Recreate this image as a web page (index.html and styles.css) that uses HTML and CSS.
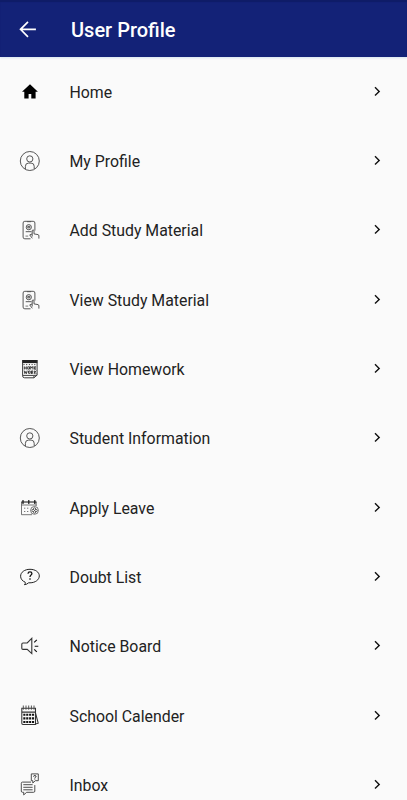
FILE: index.html
```html
<!DOCTYPE html>
<html lang="en">
<head>
<meta charset="utf-8">
<title>User Profile</title>
<link rel="stylesheet" href="styles.css">
</head>
<body>
<svg class="defs" aria-hidden="true">
  <symbol id="chevron" viewBox="0 0 12 12"><path d="M4 1.2 8.2 5.4 4 9.6" fill="none" stroke="#111" stroke-width="1.4"/></symbol>
  <symbol id="person" viewBox="0 0 24 24"><g fill="none" stroke="#444" stroke-width=".9"><circle cx="11.8" cy="12" r="9.5"/><circle cx="11.8" cy="9.9" r="3.1"/><path d="M7.4 20v-2.7q0-3.2 3.1-3.2h2.6q3.1 0 3.1 3.2V20"/></g></symbol>
  <symbol id="study" viewBox="0 0 24 24"><g fill="none" stroke="#444" stroke-width=".9"><path d="M12.5 20.8H6.8q-1.7 0-1.7-1.7V5q0-1.7 1.7-1.7h8.4q1.7 0 1.7 1.7v7.6"/><circle cx="10.8" cy="9.2" r="2.6"/><path d="M9.8 8.4h2v1.5h-2zM7.7 13.7h5.8"/><path d="M9 3.7h4M7.5 18.1h2.7" stroke-width=".7"/><path d="M14.2 18.5v-6q.9-1.2 1.8 0v3.4l4 .7q.9.2.9 1.3v2.7M14 16l-2.3.9 2.6 3.4"/></g></symbol>
</svg>
<header class="bar">
  <svg class="back" viewBox="0 0 24 24"><path d="M21.5 11.2H4M12 2.2 3 11.2l9 9" fill="none" stroke="#fff" stroke-width="2"/></svg>
  <h1>User Profile</h1>
</header>
<ul class="menu">
  <li><svg class="icon" viewBox="0 0 24 24"><path d="M12 4.3 19.9 11.7H17.6v6.8h-4.3v-4.6h-2.7v4.6H6.3v-6.8H4z"/></svg><span>Home</span><svg class="chevron"><use href="#chevron"/></svg></li>
  <li><svg class="icon"><use href="#person"/></svg><span>My Profile</span><svg class="chevron"><use href="#chevron"/></svg></li>
  <li><svg class="icon"><use href="#study"/></svg><span>Add Study Material</span><svg class="chevron"><use href="#chevron"/></svg></li>
  <li><svg class="icon"><use href="#study"/></svg><span>View Study Material</span><svg class="chevron"><use href="#chevron"/></svg></li>
  <li><svg class="icon" viewBox="0 0 24 24"><path d="M4.2 3h15.2v3.1H4.2z" fill="#222"/><path d="M4.6 3v15.8q0 2 2 2h9.3l3.2-2.7V3M15.9 20.8v-2.5h3.2M4.8 18.4h11" fill="none" stroke="#333" stroke-width=".95"/><path d="M5.5 7.6h13" stroke="#222" stroke-width="1" stroke-dasharray="1 1.7"/><path d="M6.3 9.4v3.1M8.3 9.4v3.1M6.3 11h2M9.7 9.8h1.8v2.3H9.7zM12.7 12.5V9.4l1.1 1.5 1.1-1.5v3.1M18 9.8h-1.7v2.4H18M16.3 11H18M6.2 13.6l.7 3 .8-2 .8 2 .7-3M10.5 14h1.7v2.3h-1.7zM13.5 17v-3.1h1.3v1.5h-1l1.3 1.5M16.6 13.6v3.3M18.2 13.7l-1.4 1.5 1.4 1.6" fill="none" stroke="#222" stroke-width=".85"/></svg><span>View Homework</span><svg class="chevron"><use href="#chevron"/></svg></li>
  <li><svg class="icon"><use href="#person"/></svg><span>Student Information</span><svg class="chevron"><use href="#chevron"/></svg></li>
  <li><svg class="icon" viewBox="0 0 24 24"><g fill="none" stroke="#555" stroke-width=".8"><path d="M14 18.7H3.5V6H18.2v4M3.5 9h14.7"/><path d="M3.3 6h15.4" stroke="#333"/><path d="M5 4v4M10.8 4v4M16.8 4v4" stroke="#111" stroke-width="1.15"/><path d="M6 12.2h1.3M9 12.2h1.3M6 15.5h1.3M9 15.5h1.3"/><circle cx="16.5" cy="14.4" r="3.9"/><path d="m13.7 14.5 2.9-2.9 2.7 2.9-2.7 2.8zM15.1 13l3 3M18.1 13l-3 3" stroke-width="1"/></g></svg><span>Apply Leave</span><svg class="chevron"><use href="#chevron"/></svg></li>
  <li><svg class="icon" viewBox="0 0 24 24"><path d="M7.2 17.2C4.4 16 2.6 14 2.6 11.2c0-4 4.1-6.9 9.4-6.9s9.3 2.8 9.3 6.6-4 6.9-9.3 6.9h-1.4q-1.7 1.7-4.2 1.9 1.3-1 .8-2.5z" fill="none" stroke="#222" stroke-width="1"/><path d="M10 8.7q.1-1.8 2-1.8t1.9 1.7q0 1-1.1 1.7-.8.5-.8 1.7m0 1.2v1.5" fill="none" stroke="#111" stroke-width="1.3"/></svg><span>Doubt List</span><svg class="chevron"><use href="#chevron"/></svg></li>
  <li><svg class="icon" viewBox="0 0 24 24"><path d="M13.8 4.3v15.3L9.2 15.4H5q-1.2 0-1.2-1.2v-4q0-1.2 1.2-1.2h4.2z" fill="none" stroke="#333" stroke-width="1.1"/><path d="m16.2 8.4 2.6-2.5M16.7 12.2h3.6M16.2 15.4l2.6 2.5" stroke="#111" stroke-width="1.15"/></svg><span>Notice Board</span><svg class="chevron"><use href="#chevron"/></svg></li>
  <li><svg class="icon" viewBox="0 0 24 24"><path d="M3.8 4.2h13.7v16.2H5q-1.2 0-1.2-1.2zM3.8 8.1h13.7M17.5 9l2.7 10.2-2.7.7" fill="none" stroke="#333" stroke-width="1.05"/><path d="M5.3 1.5v4.2M8 1.5v4.2M10.7 1.5v4.2M13.4 1.5v4.2M16 1.5v4.2" stroke="#444" stroke-width=".9"/><path d="M5.3 10.8h10.9M5.3 14.4h10.9M5.3 18h10.9" stroke="#111" stroke-width="2.1" stroke-dasharray="2.1 .8"/></svg><span>School Calender</span><svg class="chevron"><use href="#chevron"/></svg></li>
  <li><svg class="icon" viewBox="0 0 24 24"><g fill="none" stroke="#444" stroke-width=".95"><path d="M13 9.1H4.5q-1.2 0-1.2 1.2v7.8q0 1.2 1.2 1.2h1.2v2.6l3-2.6h6.9q1.2 0 1.2-1.2v-6M5.3 11.7h9.3M5.3 14.3h9.3M5.3 16.8h9.3"/><path d="M13.3.9h7v6.8h-3L14.8 10V7.7h-1.5z"/><path d="M15.6 3.6q0-1.1 1.2-1.1T18 3.4q0 .8-1.2 1.4v.5m0 .5v.7" stroke="#222"/></g></svg><span>Inbox</span><svg class="chevron"><use href="#chevron"/></svg></li>
</ul>
</body>
</html>
```
FILE: styles.css
```css
* {
  box-sizing: border-box;
}

body {
  margin: 0;
  height: 800px;
  overflow: hidden;
  background: #fafafa;
  color: #222;
  font-family: Roboto, sans-serif;
}

.defs {
  display: none;
}

.bar {
  display: flex;
  align-items: center;
  height: 57px;
  padding: 3px 18px 0;
  background: #132277;
  box-shadow: 0 1px 2px #d5e3ef, inset 0 2px 1px #0f1c67;
}

.back {
  width: 20px;
  height: 20px;
  margin-right: 33px;
}

h1 {
  margin: 0;
  color: #fff;
  font-size: 20px;
  font-weight: 500;
  line-height: 24px;
}

.menu {
  margin: 0;
  padding: 0;
  list-style: none;
}

.menu li {
  display: flex;
  align-items: center;
  height: 69.33px;
  padding: 0 24px 0 18px;
}

.icon {
  flex: none;
  width: 24px;
  height: 24px;
  margin-right: 27.5px;
}

.menu span {
  flex: 1;
  padding-top: 2px;
  font-size: 15.85px;
  line-height: 20px;
}

.chevron {
  flex: none;
  width: 12px;
  height: 12px;
}
```
